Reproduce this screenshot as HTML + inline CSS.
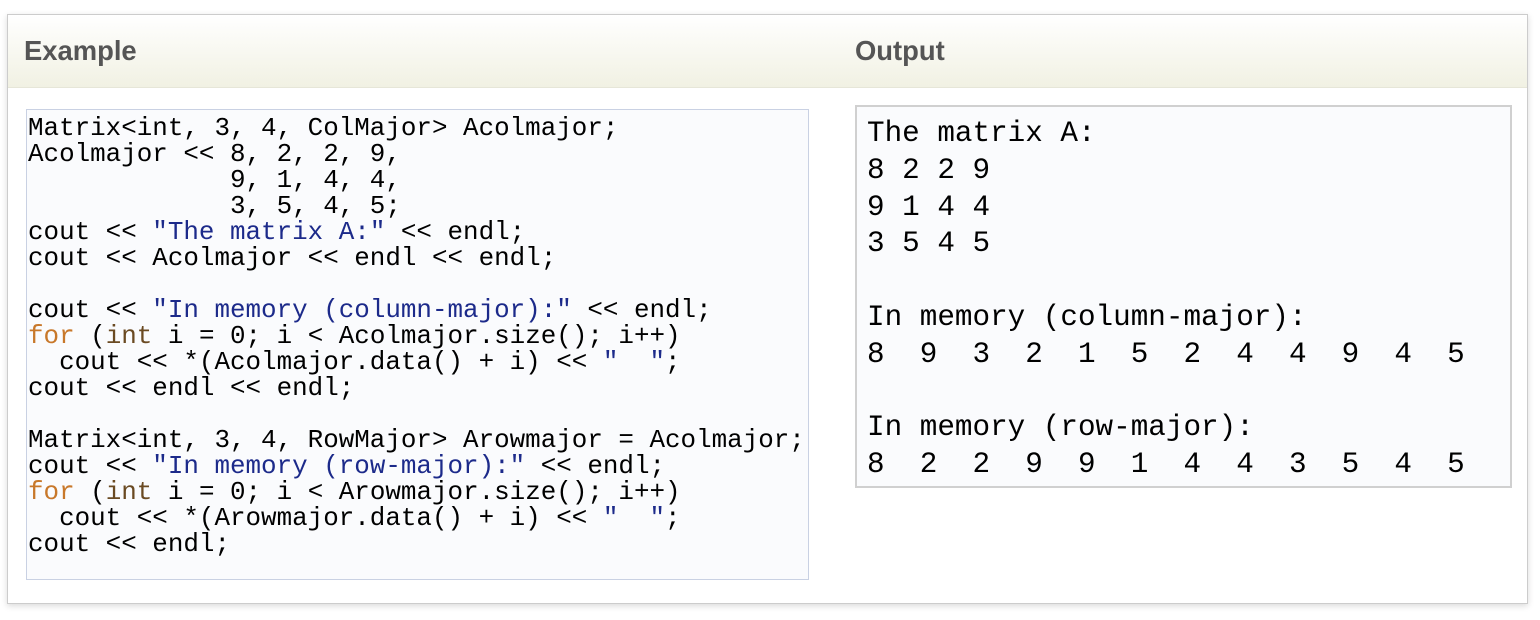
<!DOCTYPE html>
<html><head><style>
body{margin:0;width:1540px;height:620px;background:#fff;position:relative;overflow:hidden}
.outer{position:absolute;left:7px;top:14px;width:1519px;height:588px;border:1px solid #ccc;box-shadow:0 2px 6px rgba(0,0,0,.15);background:#fff}
.hdr{position:absolute;left:0;top:0;width:100%;height:72px;background:linear-gradient(#fff,#f1f1e3);border-bottom:1px solid #e6e6d8}
.h{position:absolute;top:20px;font:bold 27.4px "Liberation Sans",sans-serif;color:#555}
.code{position:absolute;left:26px;top:109px;width:783px;height:471px;border:1px solid #c9d1e3;background:#fafbfd;box-sizing:border-box;margin:0;padding:5px 0 0 1px;font:25.9px/26px "Liberation Mono",monospace;color:#000;white-space:pre}
.out{position:absolute;left:855px;top:105px;width:657px;height:383px;border:2px solid #d0d0d0;background:#fafbfd;box-sizing:border-box;margin:0;padding:9px 0 0 10px;font:29.3px/36.8px "Liberation Mono",monospace;color:#000;white-space:pre}
.s{color:#1c2a8a}.k{color:#c8782a}.t{color:#6a4a22}
</style></head><body>
<div class="outer"><div class="hdr"><div class="h" style="left:16px">Example</div><div class="h" style="left:847px">Output</div></div></div>
<pre class="code">Matrix&lt;int, 3, 4, ColMajor&gt; Acolmajor;
Acolmajor &lt;&lt; 8, 2, 2, 9,
             9, 1, 4, 4,
             3, 5, 4, 5;
cout &lt;&lt; <span class="s">"The matrix A:"</span> &lt;&lt; endl;
cout &lt;&lt; Acolmajor &lt;&lt; endl &lt;&lt; endl;

cout &lt;&lt; <span class="s">"In memory (column-major):"</span> &lt;&lt; endl;
<span class="k">for</span> (<span class="t">int</span> i = 0; i &lt; Acolmajor.size(); i++)
  cout &lt;&lt; *(Acolmajor.data() + i) &lt;&lt; <span class="s">"  "</span>;
cout &lt;&lt; endl &lt;&lt; endl;

Matrix&lt;int, 3, 4, RowMajor&gt; Arowmajor = Acolmajor;
cout &lt;&lt; <span class="s">"In memory (row-major):"</span> &lt;&lt; endl;
<span class="k">for</span> (<span class="t">int</span> i = 0; i &lt; Arowmajor.size(); i++)
  cout &lt;&lt; *(Arowmajor.data() + i) &lt;&lt; <span class="s">"  "</span>;
cout &lt;&lt; endl;</pre>
<pre class="out">The matrix A:
8 2 2 9
9 1 4 4
3 5 4 5

In memory (column-major):
8  9  3  2  1  5  2  4  4  9  4  5

In memory (row-major):
8  2  2  9  9  1  4  4  3  5  4  5</pre>
</body></html>
